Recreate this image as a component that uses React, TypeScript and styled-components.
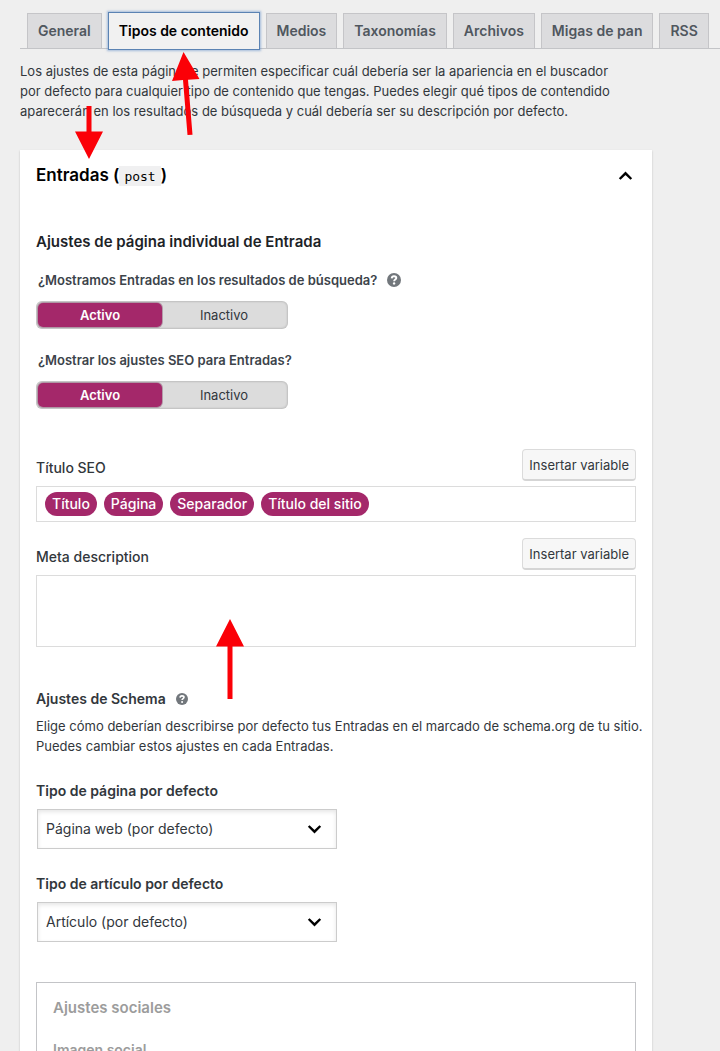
import React, { useId, useState } from "react";
import styled, { createGlobalStyle, css } from "styled-components";

const GlobalStyle = createGlobalStyle`
  *, *::before, *::after { box-sizing: border-box; }
  body {
    margin: 0;
    background: #efefef;
    color: #32373c;
    font-family: Inter, "Liberation Sans", sans-serif;
    font-size: 13px;
    line-height: 20px;
  }
  button, input, select, textarea { font: inherit; color: inherit; }
  h2, h3, p { margin: 0; }
`;

const Page = styled.main`
  position: relative;
  padding: 12px 0 0 20px;
`;

const Tabs = styled.nav`
  display: flex;
  align-items: flex-end;
  gap: 6px;
  height: 37px;
  padding-left: 7px;
  border-bottom: 1px solid #c3c4c7;
`;

const Tab = styled.a<{ $active?: boolean }>`
  flex: none;
  height: 35px;
  padding: 5px 10px;
  border: 1px solid #c5c5c8;
  border-bottom: 0;
  background: #dcdcde;
  color: #50575e;
  font-size: 14px;
  font-weight: 600;
  line-height: 24px;
  text-decoration: none;
  white-space: nowrap;
  ${(p) =>
    p.$active &&
    css`
      height: 38px;
      margin-bottom: -2px;
      border: 1px solid #5b83b3;
      background: #f1f1f1;
      box-shadow: 0 0 2px 1px rgba(91, 140, 200, 0.5);
      color: #000;
      line-height: 26px;
    `}
`;

const Intro = styled.p`
  max-width: 600px;
  margin-top: 12px;
`;

const Card = styled.section`
  max-width: 632px;
  margin-top: 29px;
  padding: 0 16px;
  background: #fff;
  box-shadow: 0 1px 2px rgba(0, 0, 0, 0.2);
`;

const CardToggle = styled.button`
  display: flex;
  align-items: center;
  justify-content: space-between;
  width: 100%;
  height: 52px;
  padding: 0 3px 0 0;
  border: 0;
  background: none;
  color: #000;
  font-size: 17px;
  font-weight: 600;
  line-height: 24px;
  cursor: pointer;
`;

const Code = styled.code`
  padding: 3px 5px 2px;
  background: #f0f0f1;
  font-family: "DejaVu Sans Mono", monospace;
  font-size: 13px;
  font-weight: 400;
`;

const SectionTitle = styled.h3`
  margin-top: 28px;
  color: #1d2327;
  font-size: 15px;
  font-weight: 600;
  line-height: 24px;
`;

const ToggleGroup = styled.fieldset`
  min-width: 0;
  margin: 16px 0 0;
  padding: 0;
  border: 0;
  & + & { margin-top: 21px; }
`;

const ToggleLegend = styled.legend`
  display: flex;
  align-items: center;
  gap: 10px;
  padding: 0 2px;
  font-weight: 600;
  height: 20px;
  color: #3c434a;
`;

const ToggleTrack = styled.div`
  display: flex;
  width: 252px;
  height: 28px;
  margin-top: 11px;
  padding: 2px;
  border-radius: 6px;
  background: #dcdcdc;
  box-shadow: inset 0 0 2px 1px rgba(0, 0, 0, 0.14);
`;

const ToggleOption = styled.label<{ $on: boolean }>`
  flex: 1;
  border-radius: 5px;
  text-align: center;
  line-height: 24px;
  cursor: pointer;
  ${(p) =>
    p.$on &&
    css`
      background: #a4286a;
      box-shadow: 0 0 0 1px rgba(120, 60, 95, 0.4);
      color: #fff;
      font-weight: 600;
    `}
`;

const HiddenRadio = styled.input`
  appearance: none;
  position: absolute;
  margin: 0;
  opacity: 0;
`;

const Field = styled.div`
  margin-top: 16px;
`;

const Editors = styled.div`
  margin-top: 40px;
`;

const FieldHead = styled.div`
  display: flex;
  align-items: flex-start;
  justify-content: space-between;
  height: 37px;
  font-size: 14px;
`;

const FieldLabel = styled.label`
  padding-top: 9px;
  font-weight: 500;
`;

const InsertButton = styled.button`
  height: 32px;
  padding: 1px 6px 0;
  border: 1px solid #dbdbdb;
  border-bottom: 2px solid #d5d5d5;
  border-radius: 4px;
  background: #f7f7f7;
  font-size: 13px;
  white-space: nowrap;
  cursor: pointer;
`;

const TokenBox = styled.div`
  display: flex;
  align-items: center;
  gap: 7px;
  height: 36px;
  padding: 0 8px;
  border: 1px solid #dcdcdc;
  background: #fff;
`;

const Token = styled.span`
  flex: none;
  padding: 0 7px;
  border-radius: 12px;
  background: #a4286a;
  color: #fff;
  font-size: 14px;
  font-weight: 500;
  line-height: 24px;
`;

const TokenInput = styled.input`
  flex: 1;
  min-width: 0;
  padding: 0;
  border: 0;
  outline: 0;
  background: none;
`;

const TextArea = styled.textarea`
  display: block;
  width: 100%;
  height: 72px;
  padding: 8px;
  border: 1px solid #dcdcdc;
  background: #fff;
  resize: none;
`;

const Schema = styled.section`
  margin-top: 42px;
`;

const SchemaTitle = styled.h3`
  display: flex;
  align-items: center;
  gap: 10px;
  margin-bottom: 7px;
  font-size: 14px;
  font-weight: 600;
  line-height: 20px;
`;

const SchemaText = styled.p`
  margin-right: -14px;
`;

const SelectField = styled.div`
  margin-top: 25px;
`;

const SelectLabel = styled.label`
  display: block;
  margin-bottom: 8px;
  font-size: 14px;
  font-weight: 600;
`;

const SelectBox = styled.div`
  position: relative;
  width: 300px;
  margin-left: 1px;
`;

const Select = styled.select`
  appearance: none;
  display: block;
  width: 100%;
  height: 40px;
  padding: 0 40px 0 8px;
  border: 1px solid #ccc;
  border-radius: 0;
  background: #fff;
  box-shadow: inset 0 2px 4px rgba(0, 0, 0, 0.1);
  font-size: 14px;
`;

const SelectArrow = styled.span`
  position: absolute;
  top: 0;
  right: 15px;
  display: flex;
  align-items: center;
  height: 100%;
  pointer-events: none;
`;

const Social = styled.section`
  margin-top: 40px;
  padding: 15px 16px 24px;
  border: 1px solid #c3c4c7;
  border-bottom: 0;
  color: #9c9c9c;
`;

const SocialTitle = styled.h3`
  font-size: 15px;
  font-weight: 600;
  line-height: 20px;
`;

const SocialLabel = styled.p`
  margin-top: 22px;
  font-size: 14px;
  font-weight: 600;
`;

const Pointer = styled.svg<{ $x: number; $y: number }>`
  position: absolute;
  left: ${(p) => p.$x}px;
  top: ${(p) => p.$y}px;
  fill: #fb0007;
  pointer-events: none;
`;

const Chevron = ({ up }: { up?: boolean }) => (
  <svg width="15" height="10" viewBox="0 0 15 10" fill="none" stroke="#000" strokeWidth="2.4" aria-hidden="true">
    <path d={up ? "M1.700 8 7.500 2.300 13.300 8" : "M1.700 2 7.500 7.700 13.300 2"} />
  </svg>
);

const HelpIcon = ({ size }: { size: number }) => (
  <svg width={size} height={size} viewBox="0 0 14 14" aria-hidden="true">
    <circle cx="7" cy="7" r="7" fill="#72777c" />
    <path d="M4.700 5.400C4.800 3.900 5.800 3.300 7 3.300c1.300 0 2.300.7 2.300 1.800 0 1.500-2.200 1.500-2.200 3.100" fill="none" stroke="#fff" strokeWidth="1.900" />
    <circle cx="7.100" cy="10.400" r="1.200" fill="#fff" />
  </svg>
);

const HelpButton = styled.button`
  display: flex;
  padding: 0;
  border: 0;
  background: none;
  cursor: pointer;
`;

function Toggle({ label, help }: { label: string; help?: boolean }) {
  const name = useId();
  const [value, setValue] = useState("Activo");
  return (
    <ToggleGroup>
      <ToggleLegend>
        {label}
        {help && (
          <HelpButton type="button" aria-label="Ayuda">
            <HelpIcon size={14} />
          </HelpButton>
        )}
      </ToggleLegend>
      <ToggleTrack>
        {["Activo", "Inactivo"].map((option) => (
          <ToggleOption key={option} $on={value === option}>
            <HiddenRadio type="radio" name={name} checked={value === option} onChange={() => setValue(option)} />
            {option}
          </ToggleOption>
        ))}
      </ToggleTrack>
    </ToggleGroup>
  );
}

function Dropdown({ label, value }: { label: string; value: string }) {
  const id = useId();
  return (
    <SelectField>
      <SelectLabel htmlFor={id}>{label}</SelectLabel>
      <SelectBox>
        <Select id={id} defaultValue={value}>
          <option>{value}</option>
        </Select>
        <SelectArrow>
          <Chevron />
        </SelectArrow>
      </SelectBox>
    </SelectField>
  );
}

const tabs = ["General", "Tipos de contenido", "Medios", "Taxonomías", "Archivos", "Migas de pan", "RSS"];
const tokens = ["Título", "Página", "Separador", "Título del sitio"];

export default function App() {
  const [active, setActive] = useState(tabs[1]);
  return (
    <>
      <GlobalStyle />
      <Page>
        <Tabs>
          {tabs.map((tab) => (
            <Tab key={tab} href="#" $active={tab === active} onClick={() => setActive(tab)}>
              {tab}
            </Tab>
          ))}
        </Tabs>
        <Intro>
          Los ajustes de esta página te permiten especificar cuál debería ser la apariencia en el buscador por defecto
          para cualquier tipo de contenido que tengas. Puedes elegir qué tipos de contendido aparecerán en los
          resultados de búsqueda y cuál debería ser su descripción por defecto.
        </Intro>
        <Card>
          <h2>
            <CardToggle type="button" aria-expanded="true">
              <span>
                Entradas (<Code>post</Code>)
              </span>
              <Chevron up />
            </CardToggle>
          </h2>
          <SectionTitle>Ajustes de página individual de Entrada</SectionTitle>
          <Toggle label="¿Mostramos Entradas en los resultados de búsqueda?" help />
          <Toggle label="¿Mostrar los ajustes SEO para Entradas?" />
          <Editors>
            <FieldHead>
              <FieldLabel htmlFor="seo-title">Título SEO</FieldLabel>
              <InsertButton type="button">Insertar variable</InsertButton>
            </FieldHead>
            <TokenBox>
              {tokens.map((token) => (
                <Token key={token}>{token}</Token>
              ))}
              <TokenInput id="seo-title" type="text" />
            </TokenBox>
            <Field>
              <FieldHead>
                <FieldLabel htmlFor="meta-description">Meta description</FieldLabel>
                <InsertButton type="button">Insertar variable</InsertButton>
              </FieldHead>
              <TextArea id="meta-description" />
            </Field>
          </Editors>
          <Schema>
            <SchemaTitle>
              Ajustes de Schema
              <HelpButton type="button" aria-label="Ayuda">
                <HelpIcon size={12} />
              </HelpButton>
            </SchemaTitle>
            <SchemaText>
              Elige cómo deberían describirse por defecto tus Entradas en el marcado de schema.org de tu sitio. Puedes
              cambiar estos ajustes en cada Entradas.
            </SchemaText>
            <Dropdown label="Tipo de página por defecto" value="Página web (por defecto)" />
            <Dropdown label="Tipo de artículo por defecto" value="Artículo (por defecto)" />
          </Schema>
          <Social>
            <SocialTitle>Ajustes sociales</SocialTitle>
            <SocialLabel>Imagen social</SocialLabel>
          </Social>
        </Card>
        <Pointer $x={75} $y={106} width="28" height="53" viewBox="0 0 28 53" aria-hidden="true">
          <path d="M11.500 0h5v25.500H28L14 53 0 25.500h11.500z" />
        </Pointer>
        <Pointer $x={171} $y={52} width="30" height="84" viewBox="0 0 30 84" aria-hidden="true">
          <path d="M12.500 0 28.500 27l-11.500.700 4.500 55-5 .400-4.500-55L1 29z" />
        </Pointer>
        <Pointer $x={216} $y={619} width="28" height="80" viewBox="0 0 28 80" aria-hidden="true">
          <path d="M14 0 28 27.500H16.500V80h-5V27.500H0z" />
        </Pointer>
      </Page>
    </>
  );
}
